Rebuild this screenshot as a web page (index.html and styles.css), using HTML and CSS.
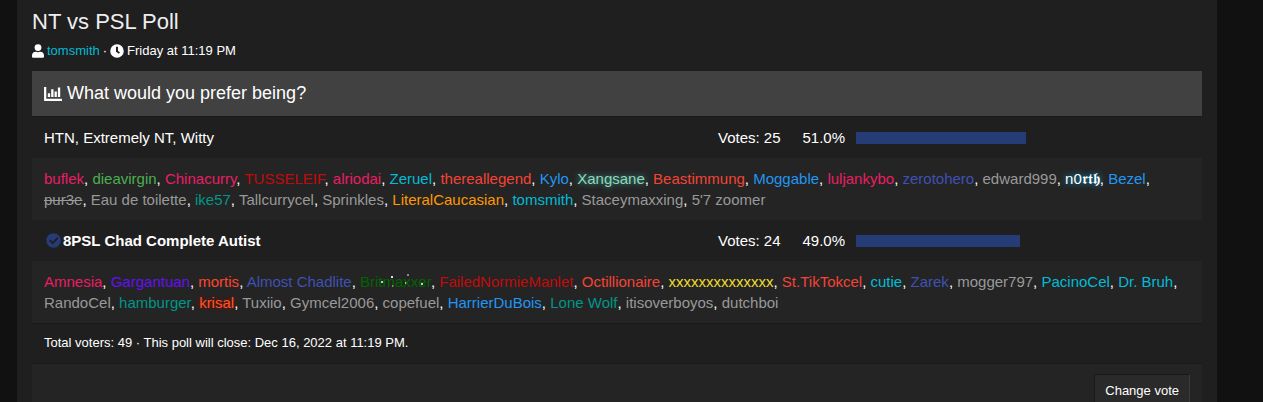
FILE: index.html
```html
<!DOCTYPE html>
<html lang="en">
<head>
  <meta charset="UTF-8">
  <title>NT vs PSL Poll</title>
  <link rel="stylesheet" href="styles.css">
</head>
<body>
  <main class="page">
    <h1>NT vs PSL Poll</h1>
    <div class="meta">
      <svg class="icon-user" viewBox="0 0 448 512"><path d="M224 256a128 128 0 1 0 0-256 128 128 0 0 0 0 256zm90 32h-17a174 174 0 0 1-146 0h-17C60 288 0 348 0 422v42c0 27 21 48 48 48h352c27 0 48-21 48-48v-42c0-74-60-134-134-134z"/></svg>
      <a href="#" class="cyan">tomsmith</a>
      <span>·</span>
      <svg class="icon-clock" viewBox="0 0 512 512"><path fill-rule="evenodd" d="M256 8a248 248 0 1 0 0 496 248 248 0 0 0 0-496zm-36 96v176l104 78 40-52-72-54V104z"/></svg>
      <time>Friday at 11:19 PM</time>
    </div>

    <section class="poll">
      <h2>
        <svg class="icon-chart" viewBox="0 0 512 400"><path d="M0 0h64v336h448v64H24a24 24 0 0 1-24-24zM108 176h66v112h-66zM204 64h66v224h-66zM300 128h66v160h-66zM396 16h66v272h-66z"/></svg>
        What would you prefer being?
      </h2>

      <div class="option">
        <h3>HTN, Extremely NT, Witty</h3>
        <span>Votes: 25</span>
        <span>51.0%</span>
        <div class="track"><div class="bar" style="width: 51%"></div></div>
      </div>
      <div class="voters">
        <a href="#" class="pink">buflek</a>, <a href="#" class="green">dieavirgin</a>, <a href="#" class="pink">Chinacurry</a>, <a href="#" class="darkred">TUSSELEIF</a>, <a href="#" class="pink">alriodai</a>, <a href="#" class="cyan">Zeruel</a>, <a href="#" class="red">thereallegend</a>, <a href="#" class="blue">Kylo</a>, <a href="#" class="mint">Xangsane</a>, <a href="#" class="red">Beastimmung</a>, <a href="#" class="blue">Moggable</a>, <a href="#" class="pink">luljankybo</a>, <a href="#" class="indigo">zerotohero</a>, <a href="#">edward999</a>, <a href="#" class="glow">n0𝖗𝖙𝖍</a>, <a href="#" class="blue">Bezel</a>,
        <a href="#" class="banned">pur3e</a>, <a href="#">Eau de toilette</a>, <a href="#" class="teal">ike57</a>, <a href="#">Tallcurrycel</a>, <a href="#">Sprinkles</a>, <a href="#" class="orange">LiteralCaucasian</a>, <a href="#" class="cyan">tomsmith</a>, <a href="#">Staceymaxxing</a>, <a href="#">5'7 zoomer</a>
      </div>

      <div class="option voted">
        <h3>
          <svg class="icon-check" viewBox="0 0 512 512"><path fill-rule="evenodd" d="M256 8a248 248 0 1 0 0 496 248 248 0 0 0 0-496zM106 267l44-45 77 77 153-153 45 45-198 198z"/></svg>8PSL Chad Complete Autist
        </h3>
        <span>Votes: 24</span>
        <span>49.0%</span>
        <div class="track"><div class="bar" style="width: 49%"></div></div>
      </div>
      <div class="voters">
        <a href="#" class="pink">Amnesia</a>, <a href="#" class="purple">Gargantuan</a>, <a href="#" class="tomato">mortis</a>, <a href="#" class="indigo">Almost Chadlite</a>, <a href="#" class="sparkle">Britmaxxer</a>, <a href="#" class="darkred">FailedNormieManlet</a>, <a href="#" class="red">Octillionaire</a>, <a href="#" class="yellow">xxxxxxxxxxxxxx</a>, <a href="#" class="red">St.TikTokcel</a>, <a href="#" class="cyan">cutie</a>, <a href="#" class="indigo">Zarek</a>, <a href="#">mogger797</a>, <a href="#" class="cyan">PacinoCel</a>, <a href="#" class="cyan">Dr. Bruh</a>,
        <a href="#">RandoCel</a>, <a href="#" class="teal">hamburger</a>, <a href="#" class="krisal">krisal</a>, <a href="#">Tuxiio</a>, <a href="#">Gymcel2006</a>, <a href="#">copefuel</a>, <a href="#" class="blue">HarrierDuBois</a>, <a href="#" class="teal">Lone Wolf</a>, <a href="#">itisoverboyos</a>, <a href="#">dutchboi</a>
      </div>

      <div class="summary">Total voters: 49 · This poll will close: Dec 16, 2022 at 11:19 PM.</div>
      <div class="footer">
        <button type="button">Change vote</button>
      </div>
    </section>
  </main>
</body>
</html>
```
FILE: styles.css
```css
* {
  box-sizing: border-box;
}
html {
  overflow: hidden;
}
body {
  margin: 0;
  background-color: #111;
  color: #fff;
  font-family: "Liberation Sans", Arial, sans-serif;
  font-size: 15px;
  line-height: 21px;
}
h1, h2, h3 {
  margin: 0;
  font-weight: normal;
}
svg {
  fill: #fff;
  flex: none;
}
a {
  color: #999;
  text-decoration: none;
}
.page {
  margin: 0 46px 0 17px;
  padding: 7px 15px 0;
  background-color: #1f1f1f;
}
h1 {
  font-size: 22px;
  line-height: 30px;
  color: #eee;
}
.meta {
  display: flex;
  align-items: center;
  gap: 3px;
  margin-top: 4px;
  font-size: 13px;
  line-height: 20px;
}
.icon-user {
  width: 12px;
  height: 14px;
}
.icon-clock {
  width: 14px;
  height: 14px;
}
.poll {
  margin-top: 10px;
}
h2 {
  display: flex;
  align-items: center;
  gap: 5px;
  padding: 10px 12px;
  background-color: #414141;
  border-bottom: 1px solid #191919;
  font-size: 18px;
  line-height: 25px;
}
.icon-chart {
  width: 18px;
  height: 14px;
}
.option {
  display: grid;
  grid-template-columns: 1fr 64px 52px 334px;
  column-gap: 11px;
  align-items: center;
  padding: 10px 12px;
}
.option span {
  white-space: nowrap;
}
.option span + span {
  text-align: right;
}
h3 {
  font-size: 15px;
}
.voted h3 {
  display: flex;
  align-items: center;
  gap: 2px;
  padding-left: 2px;
  font-weight: bold;
}
.icon-check {
  width: 15px;
  height: 15px;
  fill: #263c77;
}
.bar {
  height: 12px;
  background-color: #263c77;
}
.voters {
  padding: 10px 12px;
  background-color: #242424;
}
.summary {
  padding: 9px 12px 10px;
  border-top: 1px solid #191919;
  border-bottom: 1px solid #191919;
  font-size: 13px;
  line-height: 20px;
}
.footer {
  display: flex;
  justify-content: flex-end;
  padding: 10px 12px;
  background-color: #242424;
}
button {
  padding: 6px 10px;
  border: 1px solid;
  border-color: #191919 #3a3a3a #3a3a3a #191919;
  background-color: #2a2a2a;
  color: #fff;
  font-family: inherit;
  font-size: 13px;
  line-height: 20px;
  cursor: pointer;
}

/* username colours */
.pink { color: #e91e63; }
.green { color: #4caf50; }
.darkred { color: #c10b0b; }
.cyan { color: #00bcd4; }
.red { color: #f44336; }
.blue { color: #2196f3; }
.indigo { color: #3f51b5; }
.teal { color: #009688; }
.orange { color: #ff9800; }
.purple { color: #6610f2; }
.tomato { color: #ff4530; }
.yellow { color: #f0dc30; }
.banned {
  text-decoration: line-through;
}
.mint {
  color: #8fd8b8;
  text-shadow: 0 0 6px #3fa9a0;
}
.glow {
  color: #fff;
  text-shadow: 0 0 6px #00a8e0;
}
.krisal {
  color: #ff5722;
  text-shadow: 0 0 4px #a00000;
}
.sparkle {
  color: #006400;
  background-image:
    radial-gradient(circle at 22px 9px, #ccc 1px, transparent 1px),
    radial-gradient(circle at 32px 4px, #ddd 1px, transparent 1px),
    radial-gradient(circle at 33px 13px, #aaa 1px, transparent 1px),
    radial-gradient(circle at 46px 10px, #ccc 1px, transparent 1px),
    radial-gradient(circle at 48px 2px, #888 1px, transparent 1px),
    radial-gradient(circle at 62px 11px, #ccc 1px, transparent 1px);
}
```
